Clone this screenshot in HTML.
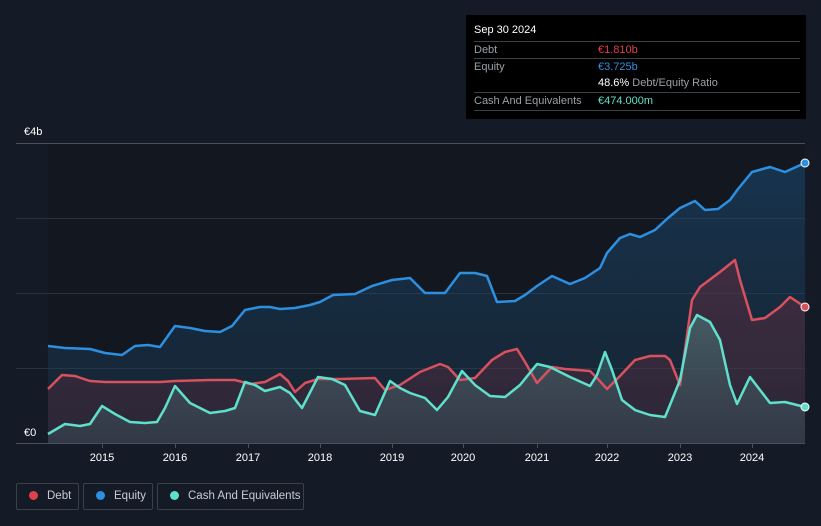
<!DOCTYPE html>
<html><head><meta charset="utf-8"><style>
html,body{margin:0;padding:0;background:#151b26;width:821px;height:526px;overflow:hidden;font-family:"Liberation Sans",sans-serif}
.tt{position:absolute;left:466px;top:15px;width:340px;height:104px;background:#000;color:#fff;font-size:11px}
.tt .r{position:absolute;left:8px;right:6px;border-top:1px solid #3a3f48;height:17px;line-height:17px}
.tt .l{color:#9aa0a8}
.tt .v{position:absolute;left:124px}
.leg{position:absolute;top:483px;height:27px;border:1px solid #3a404a;border-radius:2px;color:#c8ccd2;font-size:11.5px;line-height:25px;box-sizing:border-box;white-space:nowrap}
.leg i{display:inline-block;width:9px;height:9px;border-radius:50%;margin:0 9px 0 12px;vertical-align:-1px}
</style></head><body>
<svg width="821" height="526" style="position:absolute;left:0;top:0">
<defs>
<linearGradient id="ge" x1="0" y1="0" x2="0" y2="1"><stop offset="0" stop-color="#1b4a72" stop-opacity=".55"/><stop offset="1" stop-color="#1b3a55" stop-opacity=".35"/></linearGradient>
<linearGradient id="gd" x1="0" y1="0" x2="0" y2="1"><stop offset="0" stop-color="#6a2d40" stop-opacity=".5"/><stop offset="1" stop-color="#4a2a3a" stop-opacity=".4"/></linearGradient>
<linearGradient id="gc" x1="0" y1="0" x2="0" y2="1"><stop offset="0" stop-color="#4f8080" stop-opacity=".55"/><stop offset="1" stop-color="#3a4a55" stop-opacity=".5"/></linearGradient>
</defs>
<rect x="48" y="143" width="757" height="300" fill="#131820"/>
<g stroke="#2c323c" stroke-width="1"><line x1="16" y1="143.5" x2="805" y2="143.5" stroke="#4a505a"/><line x1="16" y1="218.5" x2="805" y2="218.5"/><line x1="16" y1="293.5" x2="805" y2="293.5"/><line x1="16" y1="368.5" x2="805" y2="368.5"/><line x1="16" y1="443.5" x2="805" y2="443.5" stroke="#4a505a"/></g>
<g stroke="#4a505a"><line x1="102.5" y1="443" x2="102.5" y2="448"/><line x1="175.5" y1="443" x2="175.5" y2="448"/><line x1="248.5" y1="443" x2="248.5" y2="448"/><line x1="320.5" y1="443" x2="320.5" y2="448"/><line x1="392.5" y1="443" x2="392.5" y2="448"/><line x1="463.5" y1="443" x2="463.5" y2="448"/><line x1="537.5" y1="443" x2="537.5" y2="448"/><line x1="607.5" y1="443" x2="607.5" y2="448"/><line x1="680.5" y1="443" x2="680.5" y2="448"/><line x1="752.5" y1="443" x2="752.5" y2="448"/></g>
<polygon fill="url(#ge)" points="48,443 48,346 65,348 90,349 105,353 122,355 135,346 148,345 160,347 175,326 190,328 205,331 220,332 232,326 245,310 260,307 270,307 280,309 295,308 310,305 320,302 333,295 355,294 372,286 392,280 410,278 425,293 445,293 460,273 475,273 487,276 497,302 515,301 525,295 537,286 552,276 570,284 585,278 600,268 607,253 620,238 630,234 640,237 655,230 668,218 680,208 695,201 705,210 718,209 730,200 738,189 752,172 770,167 785,172 805,163 805,443"/>
<polygon fill="url(#gd)" points="48,443 48,389 62,375 75,376 90,381 105,382 160,382 175,381 210,380 235,380 250,384 265,382 280,374 288,381 295,392 305,383 318,379 340,379 375,378 385,390 400,385 420,372 440,364 448,367 460,380 475,378 492,360 505,352 517,349 525,362 537,383 552,367 565,369 590,371 597,378 607,389 620,376 635,360 650,356 665,356 670,360 680,385 692,300 700,287 720,272 735,260 740,280 752,320 765,318 780,307 790,297 805,307 805,443"/>
<polygon fill="url(#gc)" points="48,443 48,434 65,424 80,426 90,424 102,406 115,414 130,422 145,423 157,422 165,408 175,386 190,403 210,413 225,411 235,408 245,382 255,385 265,391 280,387 290,393 302,408 318,377 332,379 345,385 360,411 375,415 390,381 400,388 410,393 425,398 437,410 448,397 462,371 475,385 490,396 505,397 520,385 537,364 550,367 570,377 590,386 597,375 605,352 612,370 622,400 635,410 650,415 665,417 672,400 680,380 690,328 697,315 710,322 720,340 730,385 737,404 750,377 760,390 770,403 785,402 805,407 805,443"/>
<g fill="none" stroke-width="2.5" stroke-linejoin="round">
<polyline stroke="#2d8fe0" points="48,346 65,348 90,349 105,353 122,355 135,346 148,345 160,347 175,326 190,328 205,331 220,332 232,326 245,310 260,307 270,307 280,309 295,308 310,305 320,302 333,295 355,294 372,286 392,280 410,278 425,293 445,293 460,273 475,273 487,276 497,302 515,301 525,295 537,286 552,276 570,284 585,278 600,268 607,253 620,238 630,234 640,237 655,230 668,218 680,208 695,201 705,210 718,209 730,200 738,189 752,172 770,167 785,172 805,163"/>
<polyline stroke="#d9505e" points="48,389 62,375 75,376 90,381 105,382 160,382 175,381 210,380 235,380 250,384 265,382 280,374 288,381 295,392 305,383 318,379 340,379 375,378 385,390 400,385 420,372 440,364 448,367 460,380 475,378 492,360 505,352 517,349 525,362 537,383 552,367 565,369 590,371 597,378 607,389 620,376 635,360 650,356 665,356 670,360 680,385 692,300 700,287 720,272 735,260 740,280 752,320 765,318 780,307 790,297 805,307"/>
<polyline stroke="#5fe0cc" points="48,434 65,424 80,426 90,424 102,406 115,414 130,422 145,423 157,422 165,408 175,386 190,403 210,413 225,411 235,408 245,382 255,385 265,391 280,387 290,393 302,408 318,377 332,379 345,385 360,411 375,415 390,381 400,388 410,393 425,398 437,410 448,397 462,371 475,385 490,396 505,397 520,385 537,364 550,367 570,377 590,386 597,375 605,352 612,370 622,400 635,410 650,415 665,417 672,400 680,380 690,328 697,315 710,322 720,340 730,385 737,404 750,377 760,390 770,403 785,402 805,407"/>
</g>
<circle cx="805" cy="163" r="4" fill="#2d8fe0" stroke="#fff" stroke-width="1"/>
<circle cx="805" cy="307" r="4" fill="#d9505e" stroke="#fff" stroke-width="1"/>
<circle cx="805" cy="407" r="4" fill="#5fe0cc" stroke="#fff" stroke-width="1"/>
<g fill="#fff" font-size="11" font-family="Liberation Sans, sans-serif">
<text x="24" y="135">€4b</text><text x="24" y="436">€0</text>
<g text-anchor="middle"><text x="102" y="461">2015</text><text x="175" y="461">2016</text><text x="248" y="461">2017</text><text x="320" y="461">2018</text><text x="392" y="461">2019</text><text x="463" y="461">2020</text><text x="537" y="461">2021</text><text x="607" y="461">2022</text><text x="680" y="461">2023</text><text x="752" y="461">2024</text></g>
</g>
</svg>
<div class="tt">
<div style="position:absolute;left:8px;top:9px;font-size:11px">Sep 30 2024</div>
<div class="r" style="top:26px"><span class="l">Debt</span><span class="v" style="color:#e0404a">€1.810b</span></div>
<div class="r" style="top:43px"><span class="l">Equity</span><span class="v" style="color:#2d8fe0">€3.725b</span></div>
<div class="r" style="top:60px;border-top:none"><span class="v"><b style="font-weight:normal;color:#fff">48.6%</b> <span class="l">Debt/Equity Ratio</span></span></div>
<div class="r" style="top:77px"><span class="l">Cash And Equivalents</span><span class="v" style="color:#5fe0cc">€474.000m</span></div>
<div class="r" style="top:95px;height:0"></div>
</div>
<div class="leg" style="left:16px;width:63px"><i style="background:#e0404a"></i>Debt</div>
<div class="leg" style="left:83px;width:70px"><i style="background:#2d8fe0"></i>Equity</div>
<div class="leg" style="left:157px;width:147px"><i style="background:#5fe0cc"></i>Cash And Equivalents</div>
</body></html>
